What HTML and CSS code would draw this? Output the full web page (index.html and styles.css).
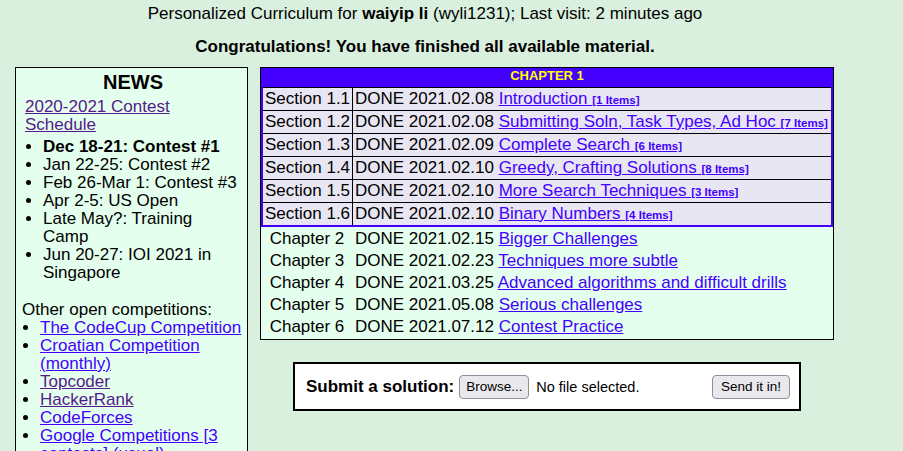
FILE: index.html
```html
<!DOCTYPE html>
<html>
<head>
<meta charset="utf-8">
<title>Personalized Curriculum</title>
<link rel="stylesheet" href="styles.css">
</head>
<body>
<div class="page">
  <p class="greet">Personalized Curriculum for <b>waiyip li</b> (wyli1231); Last visit: 2 minutes ago</p>
  <p class="congrats">Congratulations! You have finished all available material.</p>
  <div class="cols">
    <aside class="news">
      <h2 class="news-title">NEWS</h2>
      <div class="sched">
        <a class="visited" href="#">2020-2021 Contest Schedule</a>
        <ul class="list first">
          <li><b>Dec 18-21: Contest #1</b></li>
          <li>Jan 22-25: Contest #2</li>
          <li>Feb 26-Mar 1: Contest #3</li>
          <li>Apr 2-5: US Open</li>
          <li>Late May?: Training Camp</li>
          <li>Jun 20-27: IOI 2021 in Singapore</li>
        </ul>
      </div>
      <p class="other">Other open competitions:</p>
      <ul class="list">
        <li><a href="#">The CodeCup Competition</a></li>
        <li><a href="#">Croatian Competition (monthly)</a></li>
        <li><a class="visited" href="#">Topcoder</a></li>
        <li><a class="visited" href="#">HackerRank</a></li>
        <li><a href="#">CodeForces</a></li>
        <li><a href="#">Google Competitions [3 contests] (usual)</a></li>
      </ul>
    </aside>
    <main class="right">
      <div class="chapters">
        <div class="ch1">
          <div class="ch1-head">CHAPTER 1</div>
          <div class="sec"><div class="sec-name">Section 1.1</div><div class="sec-info">DONE 2021.02.08 <a href="#">Introduction </a><a class="items" href="#">[1 Items]</a></div></div>
          <div class="sec"><div class="sec-name">Section 1.2</div><div class="sec-info">DONE 2021.02.08 <a href="#">Submitting Soln, Task Types, Ad Hoc </a><a class="items" href="#">[7 Items]</a></div></div>
          <div class="sec"><div class="sec-name">Section 1.3</div><div class="sec-info">DONE 2021.02.09 <a href="#">Complete Search </a><a class="items" href="#">[6 Items]</a></div></div>
          <div class="sec"><div class="sec-name">Section 1.4</div><div class="sec-info">DONE 2021.02.10 <a href="#">Greedy, Crafting Solutions </a><a class="items" href="#">[8 Items]</a></div></div>
          <div class="sec"><div class="sec-name">Section 1.5</div><div class="sec-info">DONE 2021.02.10 <a href="#">More Search Techniques </a><a class="items" href="#">[3 Items]</a></div></div>
          <div class="sec"><div class="sec-name">Section 1.6</div><div class="sec-info">DONE 2021.02.10 <a href="#">Binary Numbers </a><a class="items" href="#">[4 Items]</a></div></div>
        </div>
        <div class="chlist">
          <div class="chrow"><div class="ch-name">Chapter 2</div><div class="ch-info">DONE 2021.02.15 <a href="#">Bigger Challenges</a></div></div>
          <div class="chrow"><div class="ch-name">Chapter 3</div><div class="ch-info">DONE 2021.02.23 <a href="#">Techniques more subtle</a></div></div>
          <div class="chrow"><div class="ch-name">Chapter 4</div><div class="ch-info">DONE 2021.03.25 <a href="#">Advanced algorithms and difficult drills</a></div></div>
          <div class="chrow"><div class="ch-name">Chapter 5</div><div class="ch-info">DONE 2021.05.08 <a href="#">Serious challenges</a></div></div>
          <div class="chrow"><div class="ch-name">Chapter 6</div><div class="ch-info">DONE 2021.07.12 <a href="#">Contest Practice</a></div></div>
        </div>
      </div>
      <form class="submit">
        <b class="submit-label">Submit a solution:</b>
        <button type="button" class="btn browse">Browse...</button>
        <span class="nofile">No file selected.</span>
        <button type="button" class="btn send">Send it in!</button>
      </form>
    </main>
  </div>
</div>
</body>
</html>
```

FILE: styles.css
```css
body {
  margin: 0;
  background: #daf0df;
  font-family: "Liberation Sans", Arial, sans-serif;
  font-size: 17px;
  color: #000;
}

a {
  color: #4400ff;
  text-decoration: underline;
}

a.visited {
  color: #551a8b;
}

.page {
  width: 820px;
  margin-left: 15px;
}

.greet {
  margin: 5px 0 0;
  text-align: center;
  line-height: 18px;
}

.congrats {
  margin: 15px 0 0;
  text-align: center;
  font-weight: bold;
  line-height: 18px;
}

.cols {
  display: grid;
  grid-template-columns: 233px 574px;
  column-gap: 12px;
  align-items: start;
  margin-top: 11px;
}

.news {
  border: 1px solid #000;
  background: #e5ffee;
  padding: 3px 3px 20px 6px;
  line-height: 18px;
}

.news-title {
  margin: 0;
  font-size: 20px;
  line-height: 22px;
  text-align: center;
}

.sched {
  padding: 0 5px 0 3px;
  margin-top: 5px;
}

.list {
  margin: 0;
  padding-left: 18px;
  list-style: disc;
}

.list.first {
  margin-top: 4px;
}

.other {
  margin: 19px 0 0;
}

.chapters {
  border: 1px solid #000;
  background: #e5ffee;
  padding-bottom: 1px;
}

.ch1 {
  background: #4400ff;
  padding: 0 2px 2px;
}

.ch1-head {
  height: 19px;
  line-height: 16px;
  text-align: center;
  color: #ffff00;
  font-weight: bold;
  font-size: 13px;
}

.sec {
  display: flex;
  background: #e8e6f2;
  border-top: 1px solid #000;
  height: 22px;
  line-height: 22px;
  white-space: nowrap;
}

.sec-name {
  width: 87px;
  padding-left: 2px;
  border-right: 1px solid #000;
}

.sec-info {
  padding-left: 2px;
}

.items {
  font-size: 11.5px;
  font-weight: bold;
}

.chlist {
  padding-top: 1px;
}

.chrow {
  display: flex;
  height: 22px;
  line-height: 22px;
  white-space: nowrap;
}

.ch-name {
  width: 92px;
  text-align: center;
}

.ch-info {
  padding-left: 2px;
}

.submit {
  box-sizing: border-box;
  width: 508px;
  height: 49px;
  margin: 22px auto 0;
  border: 2px solid #000;
  background: #fff;
  display: flex;
  align-items: center;
  padding: 0 9px 0 11px;
}

.submit-label {
  font-size: 17px;
  margin-right: 5px;
}

.btn {
  box-sizing: border-box;
  height: 24px;
  background: #e9e9ed;
  border: 1px solid #8f8f9d;
  border-radius: 4px;
  font-family: "Liberation Sans", Arial, sans-serif;
  font-size: 13.5px;
  color: #000;
  padding: 0 6px;
}

.browse {
  width: 70px;
}

.send {
  width: 78px;
  margin-left: auto;
}

.nofile {
  font-size: 14.5px;
  margin-left: 7px;
}
```
